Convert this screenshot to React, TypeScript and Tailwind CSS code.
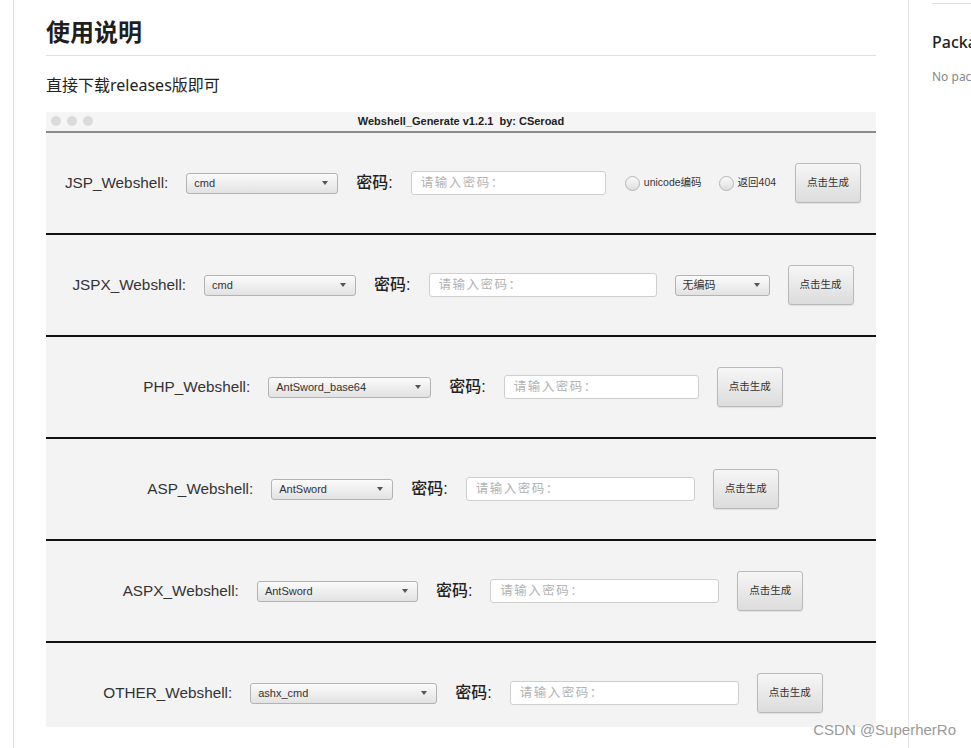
import React from "react";

type Row = {
  label: string;
  option: string;
  selectW: string;
  inputW: string;
  extra?: "radios" | "encode";
};

const rows: Row[] = [
  { label: "JSP_Webshell:", option: "cmd", selectW: "w-[152px]", inputW: "w-[195px]", extra: "radios" },
  { label: "JSPX_Webshell:", option: "cmd", selectW: "w-[152px]", inputW: "w-[228px]", extra: "encode" },
  { label: "PHP_Webshell:", option: "AntSword_base64", selectW: "w-[163px]", inputW: "w-[195px]" },
  { label: "ASP_Webshell:", option: "AntSword", selectW: "w-[122px]", inputW: "w-[229px]" },
  { label: "ASPX_Webshell:", option: "AntSword", selectW: "w-[161px]", inputW: "w-[229px]" },
  { label: "OTHER_Webshell:", option: "ashx_cmd", selectW: "w-[187px]", inputW: "w-[229px]" },
];

const FakeSelect: React.FC<{ value: string; className: string }> = ({ value, className }) => (
  <div
    className={`flex h-[21px] shrink-0 items-center justify-between rounded-[3px] border border-[#b3b3b3] bg-linear-to-b from-[#fbfbfb] to-[#e2e2e2] pl-[7px] pr-[9px] text-[11px] text-[#333] ${className}`}
  >
    <span>{value}</span>
    <span className="h-0 w-0 border-x-[3.5px] border-t-[4px] border-x-transparent border-t-[#555]" />
  </div>
);

const Radio: React.FC<{ text: string }> = ({ text }) => (
  <div className="flex shrink-0 items-center gap-[4px] text-[10.5px] text-[#333]">
    <span className="h-[15px] w-[15px] rounded-full border border-[#b5b5b5] bg-linear-to-b from-[#fafafa] to-[#dedede]" />
    <span>{text}</span>
  </div>
);

const App: React.FC = () => {
  return (
    <div
      className="relative flex h-[748px] w-full overflow-hidden bg-white"
      style={{ fontFamily: '"Noto Sans", "Noto Sans CJK SC", sans-serif' }}
    >
      <div className="w-[14px] shrink-0 border-r border-[#e0e0e0]" />

      <main className="w-[894px] shrink-0 pl-[32px] pr-[32px]">
        <h1 className="mt-[16px] border-b border-[#e1e1e1] pb-[7px] text-[24px] font-bold leading-[32px] text-[#1f1f1f]">
          使用说明
        </h1>
        <p className="mt-[17px] text-[16px] leading-[24px] text-[#222]">直接下载releases版即可</p>

        <div
          className="mt-[15px] h-[615px] overflow-hidden bg-[#f3f3f3]"
          style={{ fontFamily: '"Liberation Sans", "Noto Sans CJK SC", sans-serif' }}
        >
          <div className="relative flex h-[21px] items-center justify-center border-b-2 border-[#8a8a8a] bg-[#f5f5f5]">
            <div className="absolute left-[5px] top-[4px] flex gap-[6px]">
              <span className="h-[10px] w-[10px] rounded-full bg-[#dadada]" />
              <span className="h-[10px] w-[10px] rounded-full bg-[#dadada]" />
              <span className="h-[10px] w-[10px] rounded-full bg-[#dadada]" />
            </div>
            <span className="text-[11px] font-bold text-[#222]">
              Webshell_Generate v1.2.1&nbsp;&nbsp;by: CSeroad
            </span>
          </div>

          {rows.map((row, i) => (
            <div
              key={row.label}
              className={`box-content flex h-[100px] items-center justify-center gap-[18px] pl-[4px] ${i > 0 ? "border-t-2 border-[#111]" : ""}`}
            >
              <span className="shrink-0 text-[15.3px] text-[#333]">{row.label}</span>
              <FakeSelect value={row.option} className={row.selectW} />
              <span className="shrink-0 text-[16px] font-medium text-[#222]">密码:</span>
              <input
                readOnly
                placeholder="请输入密码："
                className={`h-[24px] shrink-0 rounded-[3px] border border-[#cfcfcf] bg-white pl-[9px] text-[12.5px] tracking-[1.5px] outline-none placeholder:text-[#b3b3b3] ${row.inputW}`}
              />
              {row.extra === "radios" && (
                <div className="mx-[1px] flex gap-[17px]">
                  <Radio text="unicode编码" />
                  <Radio text="返回404" />
                </div>
              )}
              {row.extra === "encode" && <FakeSelect value="无编码" className="w-[95px]" />}
              <button
                type="button"
                className="h-[40px] w-[66px] shrink-0 rounded-[3px] border border-[#b9b9b9] bg-linear-to-b from-[#f6f6f6] to-[#dcdcdc] text-[10.5px] text-[#333] shadow-[0_1px_1px_rgba(0,0,0,0.08)]"
              >
                点击生成
              </button>
            </div>
          ))}
        </div>
      </main>

      <aside className="min-w-0 flex-1 overflow-hidden whitespace-nowrap border-l border-[#e5e5e5] pl-[23px]">
        <div className="mt-[3px] border-t border-[#dddddd]" />
        <h2 className="mt-[26px] text-[16px] font-medium leading-[24px] text-[#222]">Packages</h2>
        <p className="mt-[14px] text-[12px] leading-[18px] text-[#888]">No packages published</p>
      </aside>

      <div
        className="absolute bottom-[9px] right-[15px] text-[15px] leading-[18px] text-[#9a9a9a]"
        style={{ fontFamily: '"Liberation Sans", sans-serif', textShadow: "0 0 2px #fff" }}
      >
        CSDN @SuperherRo
      </div>
    </div>
  );
};

export default App;
